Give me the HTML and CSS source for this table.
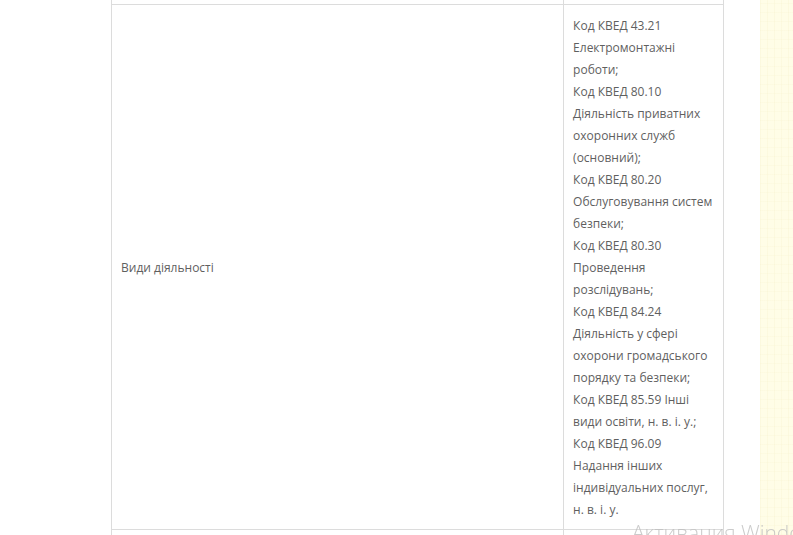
FILE: index.html
```html
<!DOCTYPE html>
<html lang="uk">
<head>
  <meta charset="UTF-8" />
  <meta name="viewport" content="width=device-width, initial-scale=1.0"/>
  <title>Види діяльності</title>
  <link rel="stylesheet" href="styles.css">
</head>
<body>
<div class="page">
  <div class="content">
    <table class="info">
      <tr class="edge">
        <td class="name"></td>
        <td class="value"></td>
      </tr>
      <tr>
        <td class="name">Види діяльності</td>
        <td class="value">
          Код КВЕД 43.21 Електромонтажні роботи;<br>
          Код КВЕД 80.10 Діяльність приватних охоронних служб (основний);<br>
          Код КВЕД 80.20 Обслуговування систем безпеки;<br>
          Код КВЕД 80.30 Проведення розслідувань;<br>
          Код КВЕД 84.24 Діяльність у сфері охорони громадського порядку та безпеки;<br>
          Код КВЕД 85.59 Інші види освіти, н. в. і. у.;<br>
          Код КВЕД 96.09 Надання інших індивідуальних послуг, н. в. і. у.
        </td>
      </tr>
      <tr class="next">
        <td class="name">&nbsp;</td>
        <td class="value">&nbsp;</td>
      </tr>
    </table>
  </div>
  <div class="side"></div>
</div>
<div class="watermark">Активация Windows</div>
</body>
</html>
```

FILE: styles.css
```css
* {
  margin: 0;
  padding: 0;
  box-sizing: border-box;
}

html, body {
  height: 100%;
  overflow: hidden;
}

body {
  font-family: 'Open Sans', 'Noto Sans', sans-serif;
  font-size: 12px;
  color: #5f5f5f;
  background: #fff;
}

.page {
  display: flex;
  min-height: 100%;
}

.content {
  width: 760px;
  padding-left: 105px;
  background: #fff;
}

.info {
  border-collapse: collapse;
  margin-left: 6px;
  width: 613px;
}

.info td {
  border: 1px solid #dcdcdc;
  padding: 10px 9px 8px;
  line-height: 22px;
  vertical-align: middle;
}

.info td.name {
  width: 453px;
}

.info td.value {
  width: 160px;
}

.info .edge td {
  border-top: 0;
  padding: 0;
  height: 4px;
  line-height: 4px;
}

.side {
  flex: 1;
  background-color: #fffde7;
  background-image:
    repeating-linear-gradient(90deg, rgba(240, 232, 185, 0.18) 0 1px, transparent 1px 7px),
    repeating-linear-gradient(0deg, rgba(240, 232, 185, 0.12) 0 1px, transparent 1px 9px);
}

.watermark {
  position: fixed;
  left: 632px;
  top: 518px;
  font-family: 'Open Sans', sans-serif;
  font-size: 21px;
  color: rgba(190, 190, 190, 0.8);
  white-space: nowrap;
  font-weight: 300;
}
```
